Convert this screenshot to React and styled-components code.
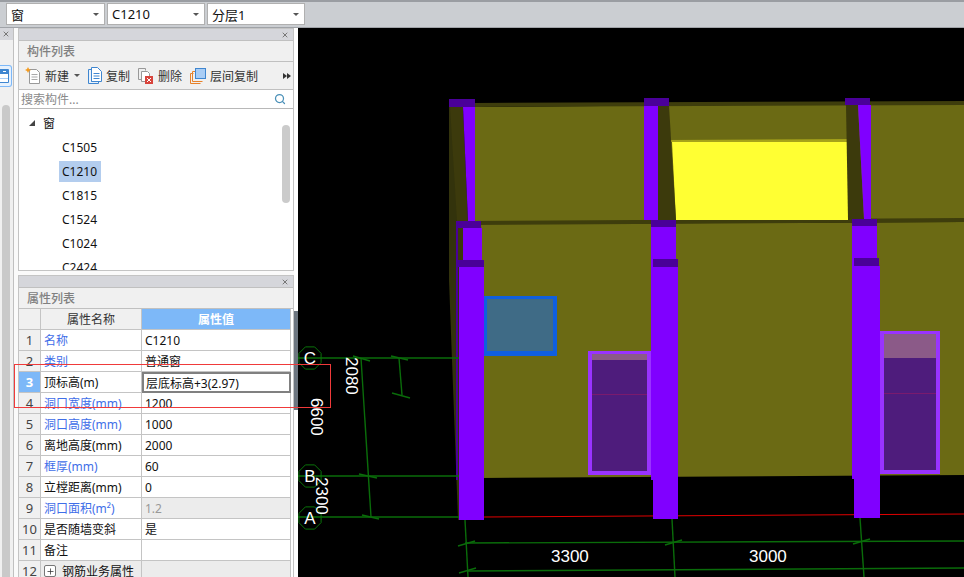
import React from "react";
import styled, { createGlobalStyle } from "styled-components";
import { Search, X, Plus } from "lucide-react";

const GlobalStyle = createGlobalStyle`
    html, body {
        margin: 0;
        padding: 0;
        background: #000;
    }
    * {
        box-sizing: border-box;
    }
`;

const Page = styled.div`
    position: relative;
    width: 964px;
    height: 577px;
    overflow: hidden;
    display: flex;
    flex-direction: column;
    background: #fafafa;
    font-family: "Noto Sans", "Noto Sans CJK SC", sans-serif;
    font-size: 12px;
    color: #111;
`;

const TopBar = styled.div`
    height: 28px;
    flex: none;
    display: flex;
    gap: 2px;
    padding: 1px 0 0 6px;
    background: #cbced2;
    border-top: 2px solid #9a9da2;
    border-bottom: 1px solid #a0a3a8;
`;

const Combo = styled.div`
    width: ${({ $w }) => $w}px;
    height: 22px;
    display: flex;
    align-items: center;
    justify-content: space-between;
    padding: 0 5px 0 4px;
    background: #fff;
    border: 1px solid #b0b0b0;
    font-size: 13px;
`;

const ComboArrow = styled.i`
    width: 0;
    height: 0;
    border-left: 3px solid transparent;
    border-right: 3px solid transparent;
    border-top: 3px solid #555;
`;

const Body = styled.div`
    flex: 1;
    display: flex;
    min-height: 0;
`;

const LeftRail = styled.div`
    width: 14px;
    flex: none;
    display: flex;
    flex-direction: column;
    background: #f0f0f0;
    border-right: 1px solid #c0c0c0;
`;

const RailHead = styled.div`
    height: 12px;
    display: flex;
    align-items: center;
    justify-content: flex-end;
    padding-right: 3px;
    background: #d5d6db;
    color: #777;
`;

const RailIcon = styled.div`
    width: 12px;
    height: 22px;
    margin-top: 25px;
    display: flex;
    align-items: center;
    border: 1px solid #7db8f8;
    border-left: none;
    border-radius: 0 3px 3px 0;
    background: #e6f1fd;
`;

const RailThumb = styled.div`
    flex: 1;
    width: 8px;
    margin: 18px 0 0 2px;
    background: #c9c9c9;
    border-radius: 4px 4px 0 0;
`;

const Sidebar = styled.div`
    width: 276px;
    margin-left: 4px;
    flex: none;
    display: flex;
    flex-direction: column;
    gap: 4px;
`;

const Panel = styled.div`
    display: flex;
    flex-direction: column;
    background: #f0f0f0;
    border: 1px solid #c4c4c4;
    ${({ $h }) => ($h ? `height: ${$h}px; flex: none;` : "flex: 1; min-height: 0; border-bottom: none;")}
`;

const PanelHead = styled.div`
    height: 12px;
    flex: none;
    display: flex;
    align-items: center;
    justify-content: flex-end;
    padding-right: 4px;
    background: #d5d6db;
    border-bottom: 1px solid #c0c0c0;
    color: #777;
`;

const PanelTitle = styled.div`
    height: 21px;
    flex: none;
    display: flex;
    align-items: center;
    padding-left: 8px;
    font-weight: 500;
    color: #808080;
    border-bottom: 1px solid #c0c0c0;
`;

const Toolbar = styled.div`
    height: 28px;
    flex: none;
    display: flex;
    align-items: center;
    padding-left: 6px;
    border-bottom: 1px solid #c0c0c0;
`;

const ToolButton = styled.div`
    display: flex;
    align-items: center;
    gap: 4px;
    margin-right: 8px;
    color: #333;
`;

const DropArrow = styled.i`
    width: 0;
    height: 0;
    margin-left: 1px;
    border-left: 3px solid transparent;
    border-right: 3px solid transparent;
    border-top: 3px solid #555;
`;

const More = styled.span`
    margin-left: auto;
    margin-right: 2px;
    display: flex;
    width: 8px;
`;

const MoreArrow = styled.i`
    width: 0;
    height: 0;
    border-top: 3px solid transparent;
    border-bottom: 3px solid transparent;
    border-left: 4px solid #333;
`;

const SearchBox = styled.div`
    height: 19px;
    flex: none;
    display: flex;
    align-items: center;
    justify-content: space-between;
    padding: 0 7px 0 2px;
    background: #fff;
    color: #8a8a8a;
    border-bottom: 1px solid #b8b8b8;
`;

const Tree = styled.div`
    position: relative;
    flex: 1;
    overflow: hidden;
    background: #fff;
    padding-top: 2px;
`;

const TreeRow = styled.div`
    height: 24px;
    display: flex;
    align-items: center;
    padding-left: ${({ $indent }) => $indent}px;
`;

const Expander = styled.i`
    width: 0;
    height: 0;
    margin-right: 8px;
    border-left: 6px solid transparent;
    border-bottom: 6px solid #444;
`;

const TreeLabel = styled.span`
    height: 21px;
    line-height: 21px;
    padding: 0 4px 0 3px;
    background: ${({ $active }) => ($active ? "#b3cdee" : "transparent")};
`;

const TreeThumb = styled.div`
    position: absolute;
    top: 16px;
    right: 3px;
    width: 8px;
    height: 78px;
    border-radius: 4px;
    background: #cbcbcb;
`;

const Table = styled.div`
    flex: 1;
    display: grid;
    grid-template-columns: 22px 101px 149px;
    grid-auto-rows: 21px;
    align-content: start;
    background: #fff;
    overflow: hidden;
`;

const Cell = styled.div`
    display: flex;
    align-items: center;
    padding-left: 3px;
    overflow: hidden;
    white-space: nowrap;
    border-right: 1px solid #c4c4c4;
    border-bottom: 1px solid #c4c4c4;
    background: ${({ $grey }) => ($grey ? "#ececec" : "#fff")};
    color: ${({ $link, $muted }) => ($link ? "#3f6ee8" : $muted ? "#999" : "#111")};
`;

const NumCell = styled(Cell)`
    justify-content: center;
    padding: 0;
    font-size: 13px;
    background: ${({ $active }) => ($active ? "#7db8f8" : "#f0f0f0")};
    color: ${({ $active }) => ($active ? "#fff" : "#444")};
    font-weight: ${({ $active }) => ($active ? 700 : 400)};
`;

const HeadCell = styled(Cell)`
    justify-content: center;
    padding: 0;
    background: ${({ $active }) => ($active ? "#7db8f8" : "#f0f0f0")};
    color: ${({ $active }) => ($active ? "#fff" : "#333")};
    font-weight: ${({ $active }) => ($active ? 700 : 400)};
`;

const EditCell = styled(Cell)`
    padding-left: 2px;
    border: 2px solid #808080;
`;

const PlusBox = styled.span`
    width: 12px;
    height: 12px;
    margin-right: 6px;
    display: flex;
    align-items: center;
    justify-content: center;
    border: 1px solid #777;
    border-radius: 2px;
    background: #fff;
`;

const Splitter = styled.div`
    width: 4px;
    flex: none;
    background: #fff;
    display: flex;
    flex-direction: column;
`;

const SplitterBar = styled.div`
    height: 99px;
    margin-top: 283px;
    background: #6d7680;
`;

const Canvas = styled.div`
    flex: 1;
    background: #000;
    min-width: 0;
`;

const Drawing = styled.svg`
    display: block;
    width: 666px;
    height: 549px;
`;

const AxisText = styled.text`
    fill: #fff;
    font-family: "Liberation Sans", sans-serif;
    font-size: ${({ $size }) => $size || 17}px;
`;

const RedBox = styled.div`
    position: absolute;
    left: 14px;
    top: 364px;
    width: 317px;
    height: 44px;
    border: 1px solid #f03a3a;
    pointer-events: none;
`;

const TREE_ITEMS = ["C1505", "C1210", "C1815", "C1524", "C1024", "C2424"];

const ROWS = [
    { name: "名称", value: "C1210", link: true },
    { name: "类别", value: "普通窗", link: true },
    { name: "顶标高(m)", value: "层底标高+3(2.97)", active: true },
    { name: "洞口宽度(mm)", value: "1200", link: true },
    { name: "洞口高度(mm)", value: "1000", link: true },
    { name: "离地高度(mm)", value: "2000" },
    { name: "框厚(mm)", value: "60", link: true },
    { name: "立樘距离(mm)", value: "0" },
    { name: "洞口面积(m²)", value: "1.2", link: true, readonly: true },
    { name: "是否随墙变斜", value: "是" },
    { name: "备注", value: "" },
];

const NewIcon = () => (
    <svg width="16" height="17" viewBox="0 0 16 17">
        <path d="M4.5 2.5h7l3 3v11h-10z" fill="#fff" stroke="#999" />
        <path d="M6.5 7.5h6M6.5 10h6M6.5 12.5h6" stroke="#aaa" />
        <path d="M3 0l1 2 2 1-2 1-1 2-1-2-2-1 2-1z" fill="#f49a1e" />
    </svg>
);

const CopyIcon = () => (
    <svg width="14" height="17" viewBox="0 0 14 17">
        <path d="M.5 2.5h3v12h7v2h-10z" fill="#eaf2fb" stroke="#3f86d0" />
        <path d="M3.5.5h6l4 4v10h-10z" fill="#fff" stroke="#3f86d0" />
        <path d="M5.5 6.5h6M5.5 9h6M5.5 11.5h6" stroke="#3f86d0" />
    </svg>
);

const DeleteIcon = () => (
    <svg width="16" height="16" viewBox="0 0 16 16">
        <path d="M.5.5h7v2M.5.5v11h3" fill="none" stroke="#999" />
        <path d="M3.5 3.500h6l2 2v3h-3v5h-5z" fill="#fff" stroke="#999" />
        <rect x="7" y="8" width="8" height="8" fill="#d8443c" />
        <path d="M9 10l4 4M13 10l-4 4" stroke="#fff" />
    </svg>
);

const LayerIcon = () => (
    <svg width="16" height="16" viewBox="0 0 16 16">
        <path d="M.5 15.500v-10h3M2.500 13.500v-10h3" fill="none" stroke="#e8822a" />
        <path d="M.5 15.500h10M2.500 13.500h10" stroke="#e8822a" />
        <rect x="5.500" y=".5" width="10" height="10" fill="#a9cdf5" stroke="#3f86d0" />
    </svg>
);

const WindowIcon = () => (
    <svg width="9" height="14" viewBox="0 0 9 14">
        <path d="M0 .5h8.500v13H0" fill="#fff" stroke="#3f86d0" />
        <rect x="0" y="1" width="8" height="4" fill="#3f86d0" />
        <rect x="3" y="2" width="3" height="1" fill="#fff" />
        <path d="M0 9.500h8" stroke="#a9cdf5" />
    </svg>
);

const PILLARS = [
    {
        cap: "449,99 475,99 475,107 449,107",
        upper: "463,107 475,107 475,221 468,221",
        shade: "450,107 463,107 468,221 457,221",
        capMid: "456,221 481,221 481,228 456,228",
        mid: "463,228 482,228 482,260 463,260",
        midShade: "458,228 463,228 463,260 458,260",
        capLow: "458,260 484,260 484,267 458,267",
        low: "459,267 484,267 484,520 459,520",
    },
    {
        cap: "644,98 669,98 669,106 644,106",
        upper: "644,106 658,106 658,220 644,220",
        shade: "658,106 669,106 676,220 658,220",
        capMid: "651,220 676,220 676,227 651,227",
        mid: "651,227 676,227 676,480 651,480",
        capLow: "653,259 678,259 678,267 653,267",
        low: "653,267 678,267 678,519 653,519",
    },
    {
        cap: "845,98 870,98 870,105 845,105",
        upper: "858,105 871,105 871,219 864,219",
        shade: "846,105 858,105 864,219 848,219",
        capMid: "852,219 877,219 877,226 852,226",
        mid: "852,226 877,226 877,479 852,479",
        capLow: "854,258 879,258 879,266 854,266",
        low: "854,266 880,266 880,518 854,518",
    },
];

const GREEN_LINES = [
    [298, 358, 459, 358],
    [298, 476, 459, 476],
    [298, 517, 459, 517],
    [361, 358, 371, 517],
    [353, 356, 370, 361],
    [359, 474, 377, 478],
    [362, 515, 379, 519],
    [399, 358, 402, 395],
    [391, 356, 408, 360],
    [392, 393, 410, 398],
    [465, 520, 468, 577],
    [672, 519, 675, 577],
    [860, 518, 864, 577],
    [465, 543, 964, 541],
    [468, 571, 964, 568],
    [458, 546, 475, 541],
    [459, 573, 476, 568],
    [665, 545, 682, 540],
    [853, 544, 870, 539],
];

const AXES = [
    { label: "C", cx: 310, cy: 358 },
    { label: "B", cx: 310, cy: 476 },
    { label: "A", cx: 310, cy: 518 },
];

const octagon = (cx, cy, r) =>
    Array.from({ length: 8 }, (_, i) => {
        const a = (Math.PI / 4) * i + Math.PI / 8;
        return `${(cx + r * Math.cos(a)).toFixed(1)},${(cy + r * Math.sin(a)).toFixed(1)}`;
    }).join(" ");

const PurpleWindow = ({ x, y, w, h, band, rail }) => (
    <g>
        <rect x={x} y={y} width={w} height={h} fill="#9933ff" />
        <rect x={x + 4} y={y + 3} width={w - 8} height={h - 7} fill="#4e1c7c" />
        <rect x={x + 4} y={y + 3} width={w - 8} height={band} fill="#8b5a88" />
        <rect x={x + 4} y={rail} width={w - 8} height={1} fill="#7a1a6e" />
    </g>
);

const Scene = () => (
    <Drawing viewBox="298 28 666 549">
        {/* walls */}
        <polygon points="475,107 964,103 964,220 475,222" fill="#6b6a14" />
        <polygon points="475,103 964,101 964,105 475,107" fill="#3e3d0c" />
        <polygon points="480,224 964,222 964,475 480,478" fill="#6b6a14" />
        <polygon points="468,221 964,218 964,222 468,225" fill="#3e3d0c" />
        <polygon points="449,107 449,280 455,440 458,520 459,520 459,107" fill="#33330c" />
        <polygon points="456,228 458,228 458,480 456,480" fill="#4a0099" />

        {/* floor line */}
        <line x1="484" y1="517" x2="964" y2="514" stroke="#e00000" />

        {/* windows */}
        <polygon points="672,142 848,142 848,220 676,220" fill="#ffff33" />
        <polygon points="665,140 853,139 853,142 665,142" fill="#a6a31a" />
        <rect x="484" y="296" width="73" height="60" fill="#0f5fe0" />
        <rect x="487" y="299" width="66" height="52" fill="#3f6b86" />
        <PurpleWindow x={588} y={351} w={63} h={124} band={6} rail={394} />
        <PurpleWindow x={880} y={331} w={60} h={143} band={24} rail={393} />

        {/* pillars */}
        {PILLARS.map((p) => (
            <g key={p.cap}>
                <polygon points={p.shade} fill="#3c3a0c" />
                <polygon points={p.upper} fill="#8000ff" />
                <polygon points={p.cap} fill="#4a0099" />
                {p.midShade && <polygon points={p.midShade} fill="#3c3a0c" />}
                <polygon points={p.mid} fill="#8000ff" />
                <polygon points={p.capMid} fill="#4a0099" />
                <polygon points={p.low} fill="#8000ff" />
                <polygon points={p.capLow} fill="#4a0099" />
            </g>
        ))}

        {/* grid */}
        {GREEN_LINES.map(([x1, y1, x2, y2]) => (
            <line key={`${x1}-${y1}-${x2}`} x1={x1} y1={y1} x2={x2} y2={y2} stroke="#0a6c0a" strokeWidth="1.4" />
        ))}
        {AXES.map((a) => (
            <g key={a.label}>
                <polygon points={octagon(a.cx, a.cy, 12)} fill="none" stroke="#0a740a" />
                <AxisText x={a.cx} y={a.cy + 6} textAnchor="middle">{a.label}</AxisText>
            </g>
        ))}
        <AxisText transform="translate(346 357) rotate(90)">2080</AxisText>
        <AxisText transform="translate(311 398) rotate(90)">6600</AxisText>
        <AxisText transform="translate(316 477) rotate(90)">2300</AxisText>
        <AxisText x="551" y="562">3300</AxisText>
        <AxisText x="749" y="562">3000</AxisText>
    </Drawing>
);

const App = () => (
    <Page>
        <GlobalStyle />
        <TopBar>
            <Combo $w={99}>窗<ComboArrow /></Combo>
            <Combo $w={98}>C1210<ComboArrow /></Combo>
            <Combo $w={98}>分层1<ComboArrow /></Combo>
        </TopBar>
        <Body>
            <LeftRail>
                <RailHead><X size={8} strokeWidth={3} /></RailHead>
                <RailIcon><WindowIcon /></RailIcon>
                <RailThumb />
            </LeftRail>
            <Sidebar>
                <Panel $h={243}>
                    <PanelHead><X size={8} strokeWidth={3} /></PanelHead>
                    <PanelTitle>构件列表</PanelTitle>
                    <Toolbar>
                        <ToolButton><NewIcon />新建<DropArrow /></ToolButton>
                        <ToolButton><CopyIcon />复制</ToolButton>
                        <ToolButton><DeleteIcon />删除</ToolButton>
                        <ToolButton><LayerIcon />层间复制</ToolButton>
                        <More><MoreArrow /><MoreArrow /></More>
                    </Toolbar>
                    <SearchBox>
                        搜索构件...
                        <Search size={12} color="#4a90b8" strokeWidth={2.5} />
                    </SearchBox>
                    <Tree>
                        <TreeRow $indent={10}><Expander />窗</TreeRow>
                        {TREE_ITEMS.map((item) => (
                            <TreeRow key={item} $indent={40}>
                                <TreeLabel $active={item === "C1210"}>{item}</TreeLabel>
                            </TreeRow>
                        ))}
                        <TreeThumb />
                    </Tree>
                </Panel>
                <Panel>
                    <PanelHead><X size={8} strokeWidth={3} /></PanelHead>
                    <PanelTitle>属性列表</PanelTitle>
                    <Table>
                        <NumCell />
                        <HeadCell>属性名称</HeadCell>
                        <HeadCell $active>属性值</HeadCell>
                        {ROWS.map((row, i) => (
                            <React.Fragment key={row.name}>
                                <NumCell $active={row.active}>{i + 1}</NumCell>
                                <Cell $link={row.link}>{row.name}</Cell>
                                {row.active ? (
                                    <EditCell>{row.value}</EditCell>
                                ) : (
                                    <Cell $grey={row.readonly} $muted={row.readonly}>{row.value}</Cell>
                                )}
                            </React.Fragment>
                        ))}
                        <NumCell>12</NumCell>
                        <Cell $grey>
                            <PlusBox><Plus size={9} color="#333" strokeWidth={2} /></PlusBox>
                            钢筋业务属性
                        </Cell>
                        <Cell $grey />
                    </Table>
                </Panel>
            </Sidebar>
            <Splitter><SplitterBar /></Splitter>
            <Canvas><Scene /></Canvas>
        </Body>
        <RedBox />
    </Page>
);

export default App;
